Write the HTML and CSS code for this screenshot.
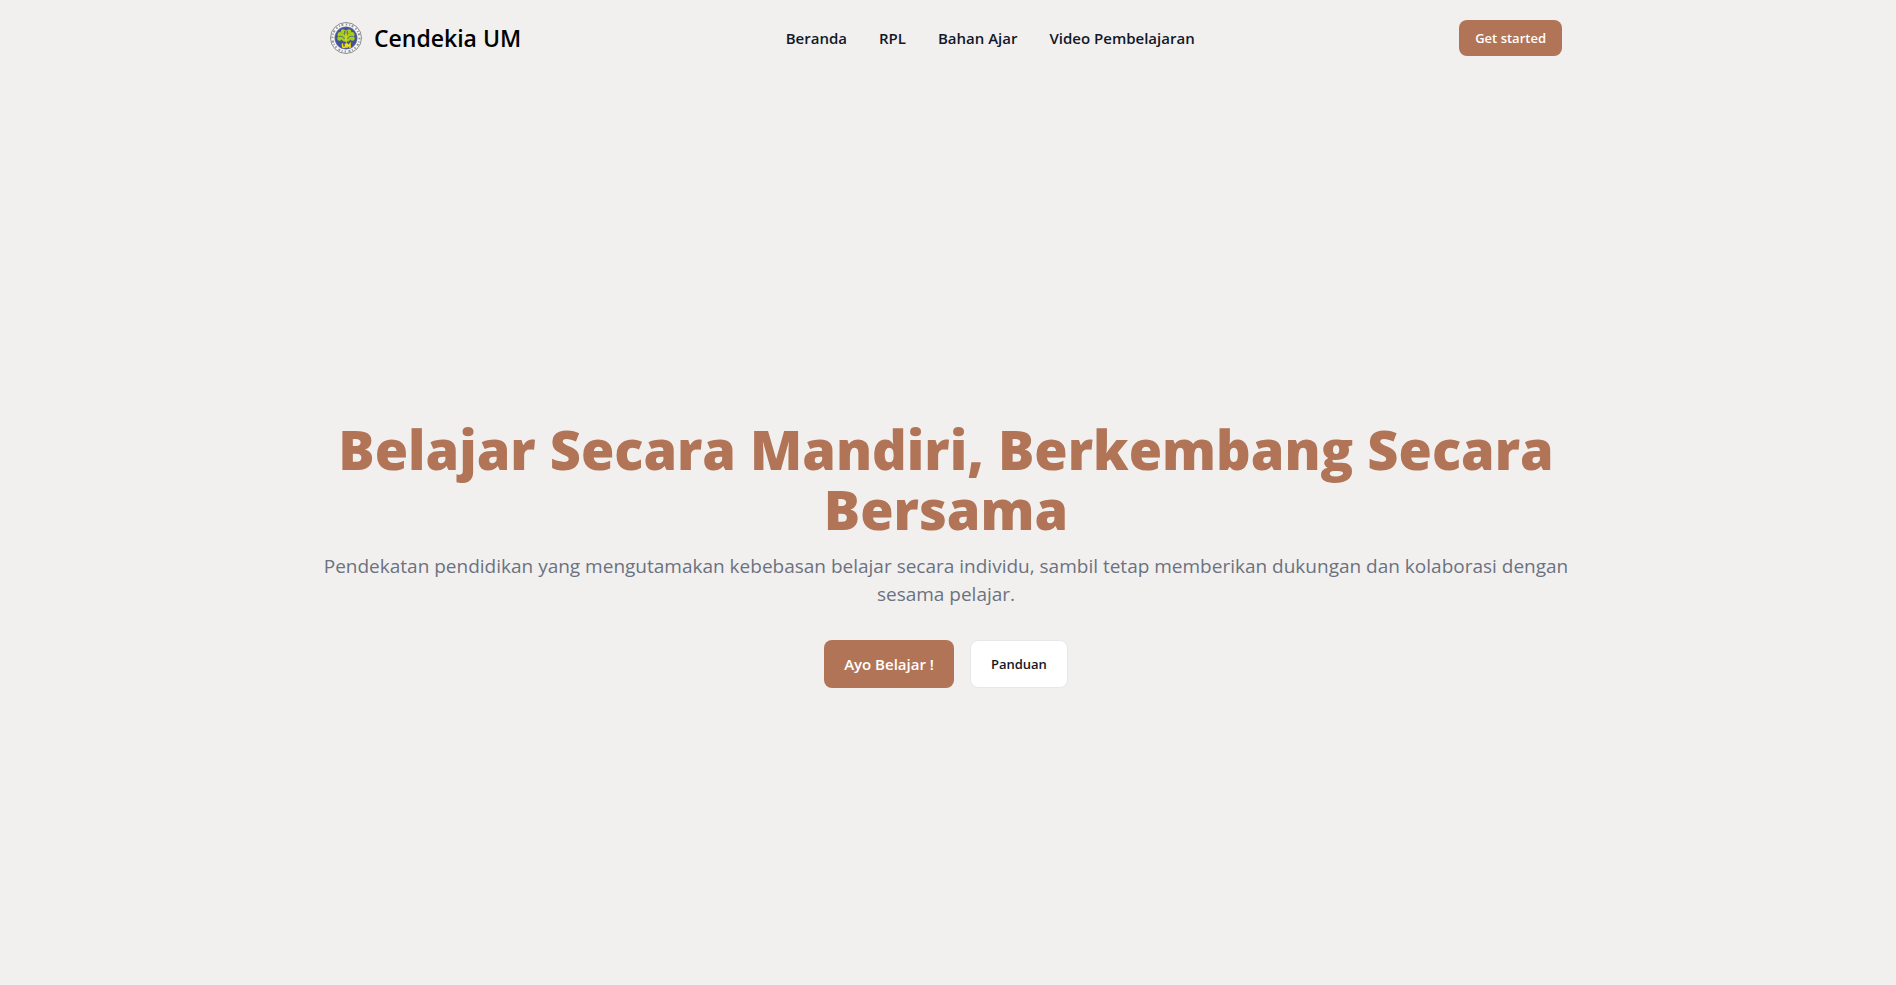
FILE: index.html
```html
<!DOCTYPE html>
<html lang="id">
<head>
<meta charset="utf-8">
<meta name="viewport" content="width=device-width, initial-scale=1">
<title>Cendekia UM</title>
<link rel="stylesheet" href="styles.css">
</head>
<body>
<header class="site-header">
  <a class="brand" href="#">
    <svg class="brand-logo" viewBox="0 0 64 64" aria-hidden="true">
      <circle cx="32" cy="32" r="31" fill="#f7f7f7" stroke="#8d8d90" stroke-width="2"/>
      <circle cx="32" cy="32" r="27" fill="none" stroke="#55565c" stroke-width="4" stroke-dasharray="3 4 2 3 4 5" opacity=".6"/>
      <circle cx="32" cy="32" r="22.500" fill="#42529b" stroke="#787d95" stroke-width="1"/>
      <g fill="#a9cf12">
        <circle cx="26" cy="19" r="4.500"/><circle cx="38" cy="19" r="4.500"/>
        <circle cx="20" cy="25" r="5"/><circle cx="44" cy="25" r="5"/>
        <circle cx="19" cy="33" r="4.500"/><circle cx="45" cy="33" r="4.500"/>
        <path d="M21 23h22v10l-6 6H27l-6-6z"/>
      </g>
      <g fill="none" stroke="#42529b" stroke-width="1.500">
        <path d="M29 18l1 9M35 18l-1 9M18 29c5-1 9 0 11 5M46 29c-5-1-9 0-11 5"/>
      </g>
      <path d="M32 16v20M30 38h4" stroke="#f0e313" stroke-width="2"/>
      <path d="M25 43v5q0 3 3 3t3-3v-5M34 52v-8l3 4 3-4v8" fill="none" stroke="#f4e600" stroke-width="3"/>
    </svg>
    <span>Cendekia UM</span>
  </a>
  <nav class="site-nav" aria-label="Utama">
    <a href="#">Beranda</a>
    <a href="#">RPL</a>
    <a href="#">Bahan Ajar</a>
    <a href="#">Video Pembelajaran</a>
  </nav>
  <button class="button button-small" type="button">Get started</button>
</header>
<main class="hero">
  <h1>Belajar Secara Mandiri, Berkembang Secara Bersama</h1>
  <p>Pendekatan pendidikan yang mengutamakan kebebasan belajar secara individu, sambil tetap memberikan dukungan dan kolaborasi dengan sesama pelajar.</p>
  <div class="actions">
    <button class="button button-large" type="button">Ayo Belajar !</button>
    <button class="button button-light" type="button">Panduan</button>
  </div>
</main>
</body>
</html>
```
FILE: styles.css
```css
* { box-sizing: border-box; }
body {
  margin: 0;
  min-height: 100vh;
  display: flex;
  flex-direction: column;
  align-items: center;
  padding-right: 4px;
  background: #f2f0ef;
  color: #111827;
  font-family: "Segoe UI", "Open Sans", "Noto Sans", sans-serif;
}
.site-header, .hero { width: 100%; max-width: 1284px; }
.site-header {
  display: flex;
  align-items: center;
  justify-content: space-between;
  padding: 20px 26px;
}
.brand, .site-nav a { color: inherit; text-decoration: none; }
.brand {
  display: flex;
  align-items: center;
  gap: 12px;
  color: #000;
  font-size: 23px;
  font-weight: 600;
  line-height: 36px;
}
.brand-logo { width: 32px; height: 32px; }
.site-nav { display: flex; gap: 32px; font-size: 15px; font-weight: 600; line-height: 24px; }
.button {
  border: 0;
  border-radius: 8px;
  background: #b17457;
  color: #fff;
  font-family: inherit;
  font-weight: 600;
  cursor: pointer;
}
.button-small { padding: 8px 16px; font-size: 13px; line-height: 20px; }
.hero {
  flex: 1;
  display: flex;
  flex-direction: column;
  justify-content: center;
  align-items: center;
  padding: 46px 16px 0;
  text-align: center;
}
.hero h1 {
  margin: 0;
  color: #b17457;
  font-size: 54px;
  font-weight: 800;
  line-height: 60px;
}
.hero p {
  margin: 13px 0 32px;
  color: #6b7280;
  font-size: 19px;
  line-height: 28px;
}
.actions { display: flex; gap: 16px; }
.button-large { padding: 12px 20px; font-size: 15px; line-height: 24px; }
.button-light {
  padding: 12px 20px;
  border: 1px solid #e5e7eb;
  background: #fff;
  color: #111827;
  font-size: 13px;
  line-height: 20px;
}
```
